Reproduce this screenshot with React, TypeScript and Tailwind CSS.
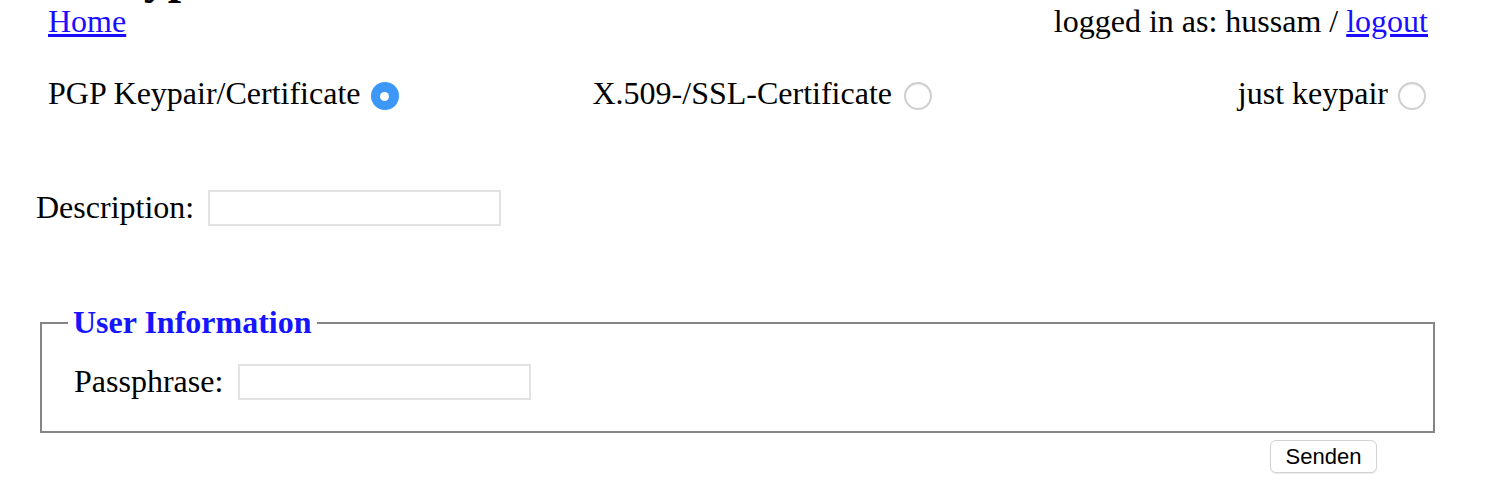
import React from 'react'

function Radio({ checked }: { checked?: boolean }) {
  if (checked) {
    return (
      <span className="mt-[5px] flex h-[28px] w-[28px] items-center justify-center rounded-full bg-[#3d97f7]">
        <span className="h-[9px] w-[9px] rounded-full bg-white" />
      </span>
    )
  }
  return (
    <span className="mt-[5px] h-[28px] w-[28px] rounded-full border-2 border-[#cfcfcf] bg-white shadow-[inset_0_1px_1px_rgba(0,0,0,0.06)]" />
  )
}

function TextField() {
  return <span className="block h-[36px] w-[293px] border-2 border-[#e2e2e2] bg-white" />
}

export default function App() {
  return (
    <div className="min-h-[502px] w-[1486px] overflow-hidden bg-white font-['Liberation_Serif',serif] text-[32px] leading-[37px] text-black">
      <h1 className="-mt-[50px] h-[53px] pl-[85px] text-[48px] leading-[54px] font-bold">Keypair</h1>

      <div className="flex h-[37px] justify-between pl-[48px] pr-[58px]">
        <a href="#" className="text-[#1a0dff] underline">Home</a>
        <span>
          logged in as: hussam / <a href="#" className="text-[#1a0dff] underline">logout</a>
        </span>
      </div>

      <div className="mt-[35px] flex h-[37px] pl-[48px] pr-[60px]">
        <label className="flex items-center gap-[10px]">
          <span>PGP Keypair/Certificate</span>
          <Radio checked />
        </label>
        <label className="ml-[194px] flex items-center gap-[12px]">
          <span>X.509-/SSL-Certificate</span>
          <Radio />
        </label>
        <label className="ml-auto flex items-center gap-[10px]">
          <span>just keypair</span>
          <Radio />
        </label>
      </div>

      <div className="mt-[77px] flex h-[37px] items-center gap-[14px] pl-[36px]">
        <span>Description:</span>
        <TextField />
      </div>

      <fieldset className="ml-[40px] mt-[78px] w-[1395px] border-2 border-[#858585] px-[26px] pb-[31px] pt-[22px]">
        <legend className="px-[5px] font-bold text-[#1515ff]">User Information</legend>
        <div className="flex h-[37px] items-center gap-[15px] pl-[6px]">
          <span>Passphrase:</span>
          <TextField />
        </div>
      </fieldset>

      <div className="ml-[40px] mt-[7px] flex w-[1395px] justify-end pr-[58px]">
        <button className="h-[33px] w-[107px] rounded-[6px] border border-[#d2d2d2] bg-white font-['Liberation_Sans',sans-serif] text-[22px] leading-none text-black shadow-[0_1px_1px_rgba(0,0,0,0.08)]">
          Senden
        </button>
      </div>
    </div>
  )
}
